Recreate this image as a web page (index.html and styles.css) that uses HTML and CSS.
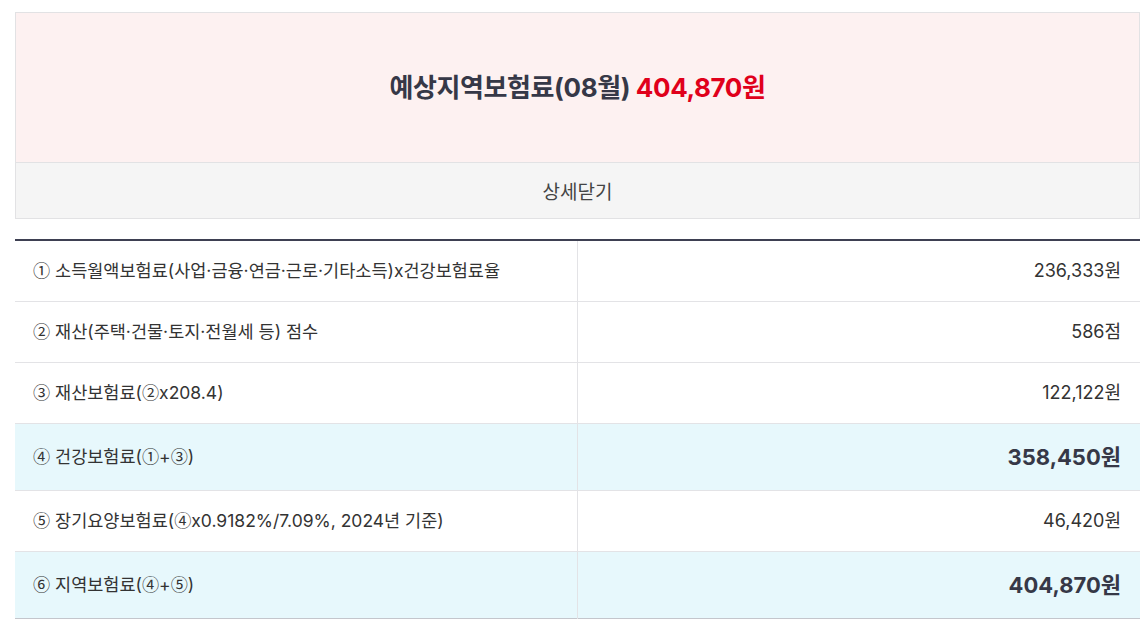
FILE: index.html
```html
<!DOCTYPE html>
<html lang="ko">
<head>
<meta charset="utf-8">
<link rel="stylesheet" href="styles.css">
</head>
<body>
<div class="wrap">
  <div class="summary">
    <div class="summary-main">
      <h2 class="summary-title">예상지역보험료(08월) <span class="amount">404,870원</span></h2>
    </div>
    <div class="summary-toggle">상세닫기</div>
  </div>
  <table class="detail">
    <tbody>
      <tr>
        <td class="label"><span class="circ">①</span> 소득월액보험료(사업·금융·연금·근로·기타소득)x건강보험료율</td>
        <td class="value">236,333원</td>
      </tr>
      <tr>
        <td class="label"><span class="circ">②</span> 재산(주택·건물·토지·전월세 등) 점수</td>
        <td class="value">586점</td>
      </tr>
      <tr>
        <td class="label"><span class="circ">③</span> 재산보험료(<span class="circ">②</span>x208.4)</td>
        <td class="value">122,122원</td>
      </tr>
      <tr class="total">
        <td class="label"><span class="circ">④</span> 건강보험료(<span class="circ">①</span>+<span class="circ">③</span>)</td>
        <td class="value">358,450원</td>
      </tr>
      <tr>
        <td class="label"><span class="circ">⑤</span> 장기요양보험료(<span class="circ">④</span>x0.9182%/7.09%, 2024년 기준)</td>
        <td class="value">46,420원</td>
      </tr>
      <tr class="total">
        <td class="label"><span class="circ">⑥</span> 지역보험료(<span class="circ">④</span>+<span class="circ">⑤</span>)</td>
        <td class="value">404,870원</td>
      </tr>
    </tbody>
  </table>
</div>
</body>
</html>
```

FILE: styles.css
```css
html, body {
  margin: 0;
  padding: 0;
  background: #ffffff;
}
body {
  font-family: Inter, "Noto Sans CJK KR", sans-serif;
  color: #333;
}
.wrap {
  margin: 12px 7px 0 15px;
}
.summary {
  border: 1px solid #e2e2e4;
}
.summary-main {
  background: #fdf1f1;
  height: 149px;
  display: flex;
  align-items: center;
  justify-content: center;
  border-bottom: 1px solid #e2e2e4;
}
.summary-title {
  margin: 0;
  font-size: 26px;
  font-weight: 700;
  line-height: 34px;
  color: #363847;
  letter-spacing: -0.4px;
}
.amount {
  color: #e0001b;
}
.summary-toggle {
  background: #f5f5f5;
  height: 55px;
  display: flex;
  align-items: center;
  justify-content: center;
  font-size: 19px;
  color: #444;
}
.detail {
  margin-top: 20px;
  width: 100%;
  border-collapse: collapse;
  border-top: 2px solid #3e4052;
  border-bottom: 1px solid #c4c6cc;
  table-layout: fixed;
}
.detail td {
  border-bottom: 1px solid #e3e3e6;
  padding: 0 20px;
  height: 61px;
  box-sizing: border-box;
  font-size: 18px;
  line-height: 24px;
  color: #333;
}
.circ {
  font-size: 0.98em;
  line-height: 1;
  font-family: "Noto Sans CJK KR", sans-serif;
}
.detail td.label {
  padding-left: 18px;
  font-size: 17.5px;
  border-right: 1px solid #e3e3e6;
}
.detail td.value {
  text-align: right;
  padding-right: 19px;
}
.detail tr.total td {
  background: #e7f8fc;
  height: 67px;
}
.detail tr.total td.value {
  font-size: 22px;
  font-weight: 700;
  line-height: 28px;
  color: #363847;
}
.detail tr:last-child td {
  border-bottom: none;
}
```
